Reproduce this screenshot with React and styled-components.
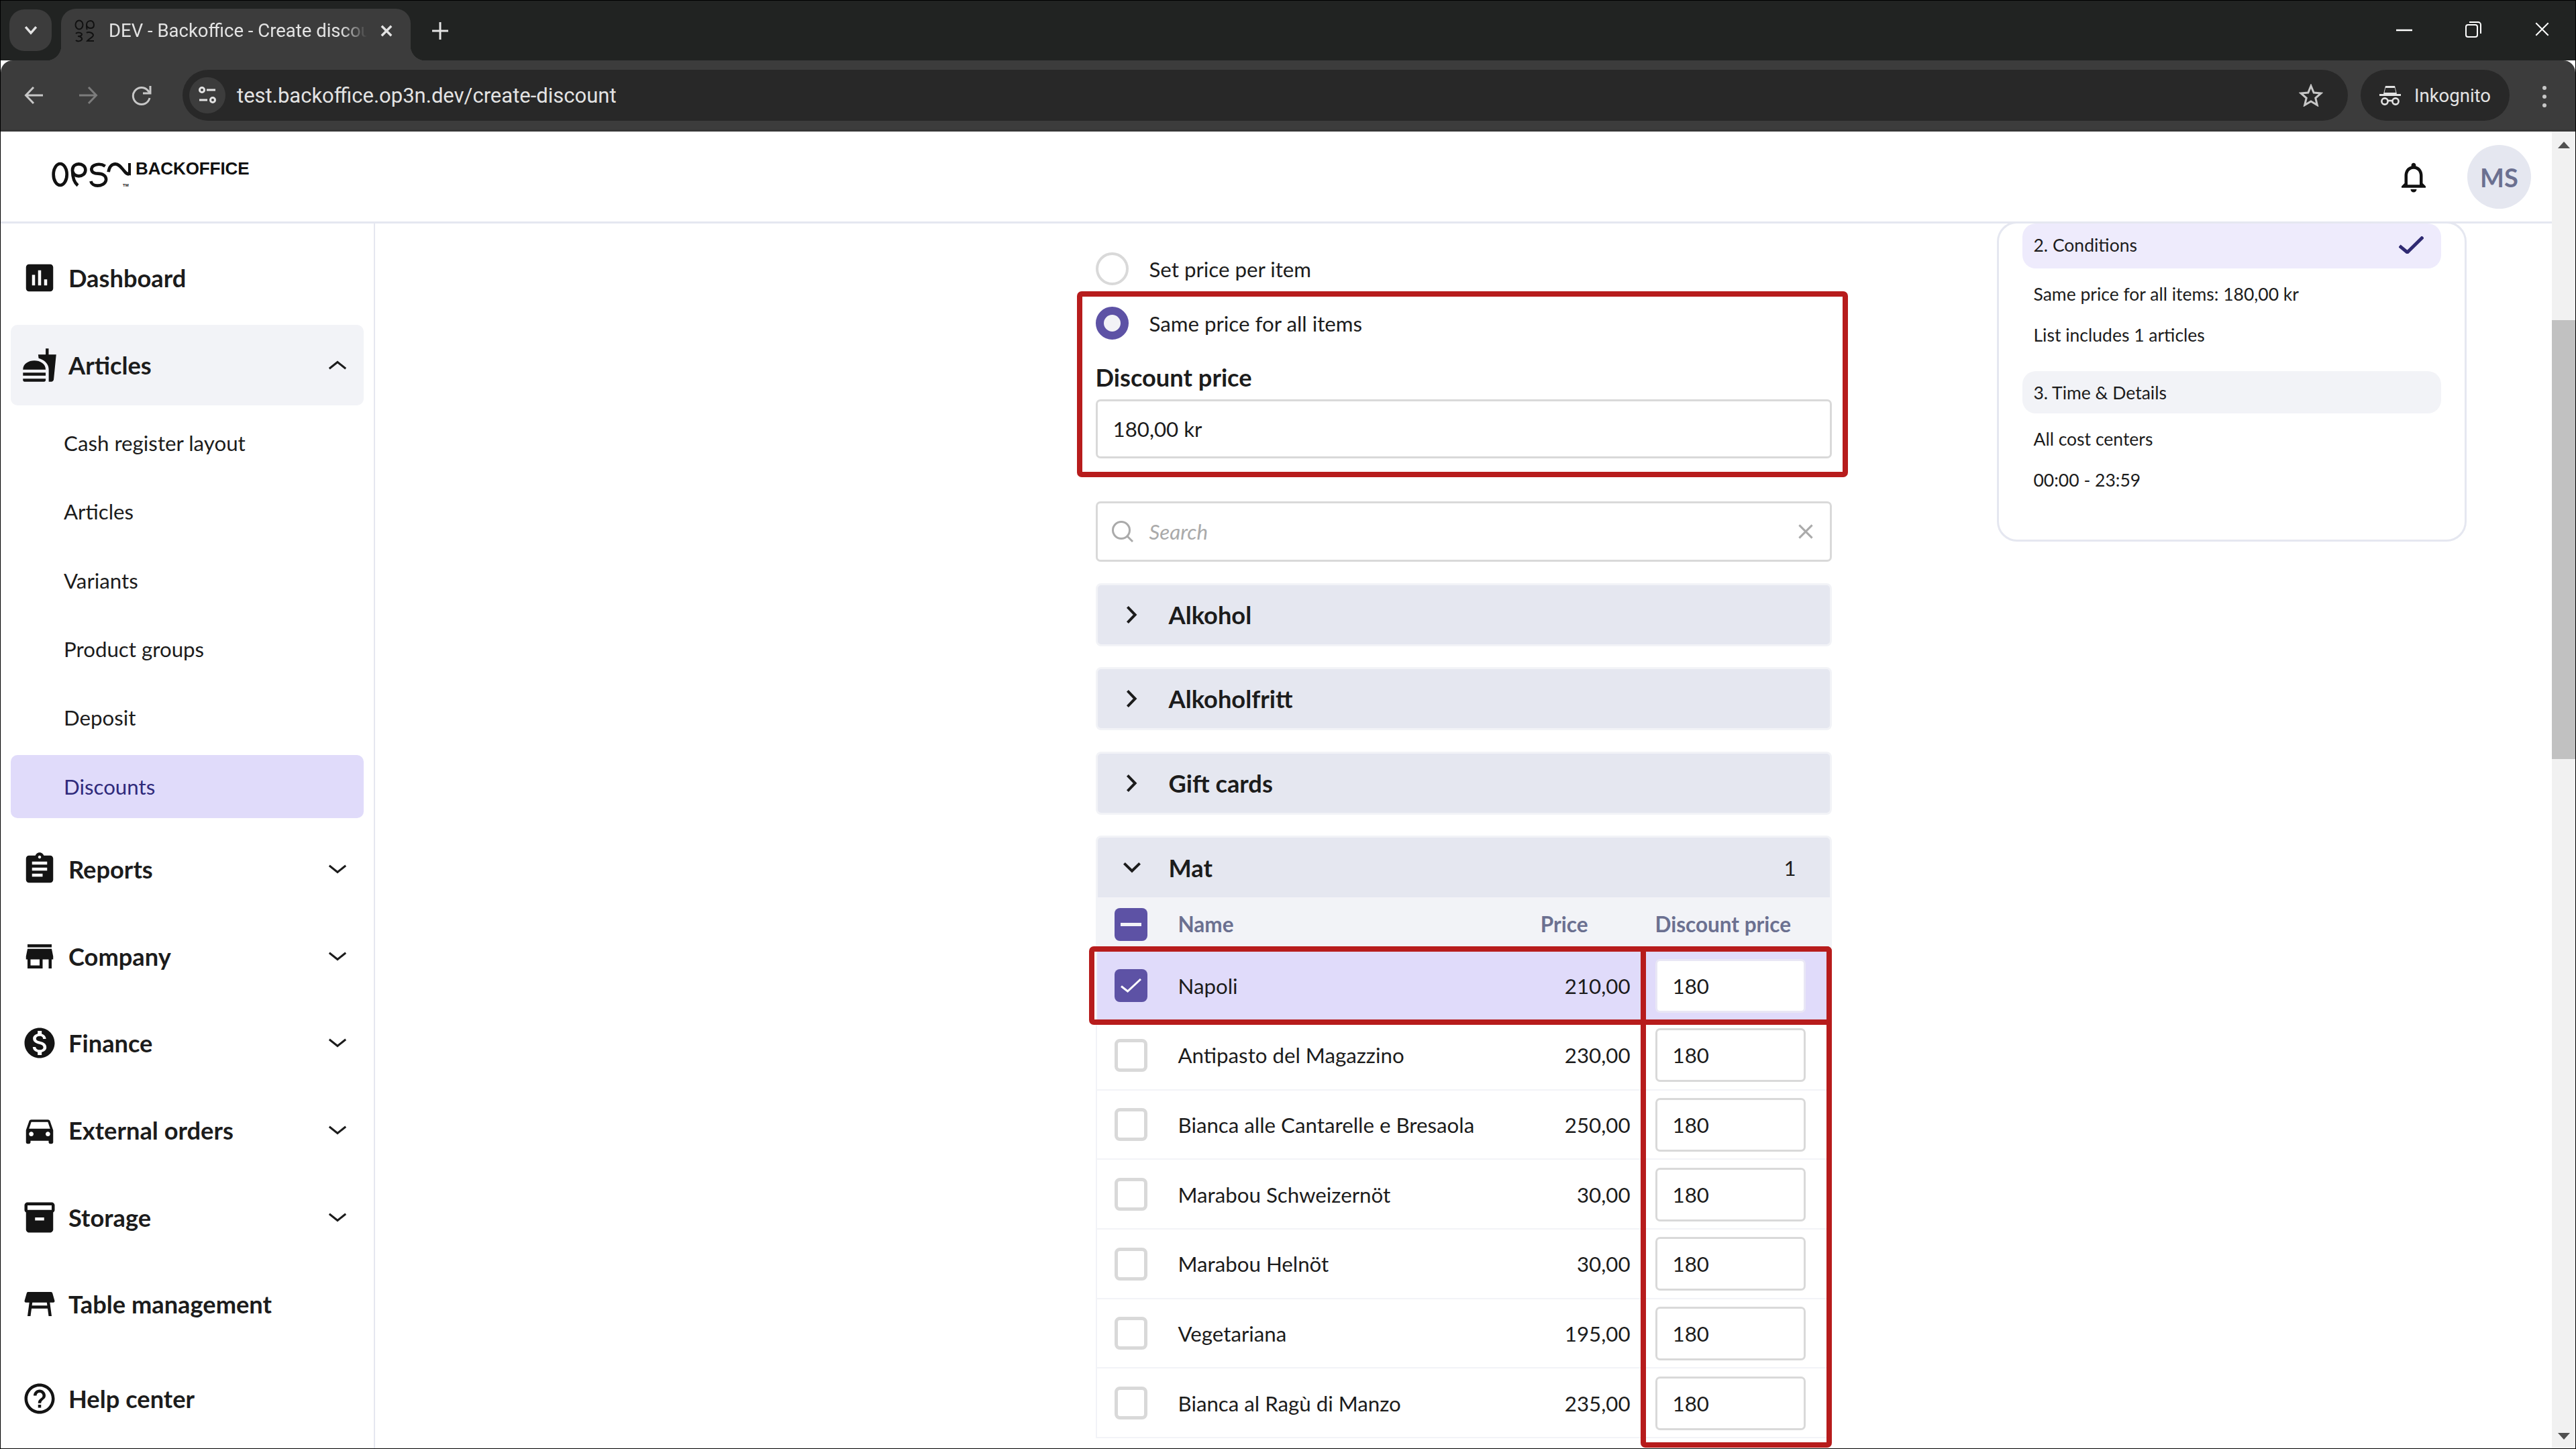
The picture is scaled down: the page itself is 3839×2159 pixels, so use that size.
import React from 'react';
import styled, {createGlobalStyle} from 'styled-components';
import {
  MdAssessment,
  MdFastfood,
  MdAssignment,
  MdStore,
  MdMonetizationOn,
  MdDirectionsCar,
  MdInventory2,
  MdTableRestaurant,
  MdHelpOutline,
  MdNotificationsNone,
} from 'react-icons/md';

const GlobalStyle = createGlobalStyle`
  * { box-sizing: border-box; }
  html, body { margin: 0; padding: 0; overflow: hidden; background: #fff; }
  body { font-family: Lato, "Liberation Sans", sans-serif; color: #1a1a1a; }
`;

const Window = styled.div`
  width: 100vw;
  height: 100vh;
  display: flex;
  flex-direction: column;
  border: 1px solid #000;
  overflow: hidden;
`;

/* browser chrome */
const TabStrip = styled.div`
  height: 89px;
  flex: none;
  display: flex;
  background: #212322;
  font-family: Roboto, "Noto Sans", sans-serif;
  color: #e3e3e3;
`;

const TabListButton = styled.div`
  width: 63px;
  height: 62px;
  margin: 13px 0 0 13px;
  border-radius: 22px;
  background: #3c3c3c;
  display: flex;
  align-items: center;
  justify-content: center;
`;

const Tab = styled.div`
  position: relative;
  width: 521px;
  height: 77px;
  margin: 12px 0 0 14px;
  padding: 0 0 12px 20px;
  border-radius: 22px 22px 0 0;
  background: #3c3c3c;
  display: flex;
  align-items: center;
  font-size: 27.5px;

  &::before, &::after {
    content: '';
    position: absolute;
    bottom: 0;
    width: 22px;
    height: 22px;
  }
  &::before {
    left: -22px;
    background: radial-gradient(circle at 0 0, transparent 22px, #3c3c3c 22.5px);
  }
  &::after {
    right: -22px;
    background: radial-gradient(circle at 100% 0, transparent 22px, #3c3c3c 22.5px);
  }
`;

const TabTitle = styled.div`
  width: 385px;
  margin-left: 21px;
  white-space: nowrap;
  -webkit-mask-image: linear-gradient(90deg, #000 90%, transparent 100%);
  mask-image: linear-gradient(90deg, #000 90%, transparent 100%);
`;

const TabClose = styled.div`
  margin-left: 20px;
  display: flex;
`;

const NewTab = styled.div`
  margin: 32px 0 0 32px;
  display: flex;
  height: 26px;
`;

const WindowControls = styled.div`
  margin-left: auto;
  display: flex;
  align-items: flex-start;
  padding: 31px 38px 0 0;
  gap: 79px;
`;

const Toolbar = styled.div`
  height: 106px;
  flex: none;
  display: flex;
  align-items: flex-start;
  padding: 14px 0 0 35px;
  background: #3c3c3c;
  border-radius: 18px 18px 0 0;
  border-bottom: 3px solid #373737;
  font-family: Roboto, "Noto Sans", sans-serif;
  color: #e3e3e3;
`;

const NavArrows = styled.div`
  display: flex;
  align-items: center;
  height: 76px;
  gap: 50px;
`;

const AddressBar = styled.div`
  width: 3227px;
  height: 76px;
  margin-left: 46px;
  padding: 0 37px 0 10px;
  border-radius: 38px;
  background: #282828;
  display: flex;
  align-items: center;
  font-size: 31px;
`;

const SiteInfo = styled.div`
  width: 54px;
  height: 54px;
  border-radius: 50%;
  background: #3c3c3c;
  display: flex;
  align-items: center;
  justify-content: center;
`;

const Url = styled.div`
  margin-left: 17px;
  flex: 1;
`;

const IncognitoPill = styled.div`
  width: 222px;
  height: 76px;
  margin-left: 19px;
  padding-left: 28px;
  border-radius: 38px;
  background: #282828;
  display: flex;
  align-items: center;
  gap: 20px;
  font-size: 27.5px;
`;

const MenuDots = styled.div`
  margin: 24px 0 0 49px;
  display: flex;
  flex-direction: column;
  gap: 7px;

  span {
    width: 6px;
    height: 6px;
    border-radius: 50%;
    background: #c7c7c7;
  }
`;

/* page */
const Page = styled.div`
  flex: 1;
  min-height: 0;
  display: flex;
  background: #fff;
`;

const PageContent = styled.div`
  flex: 1;
  min-width: 0;
  display: flex;
  flex-direction: column;
`;

const Scrollbar = styled.div`
  width: 35px;
  flex: none;
  background: #f1f1f1;
  display: flex;
  flex-direction: column;
  align-items: center;
`;

const ScrollArrow = styled.div`
  width: 0;
  height: 0;
  border-left: 9px solid transparent;
  border-right: 9px solid transparent;
  ${(p) => (p.$down
    ? 'border-top: 10px solid #505050; margin-top: auto; margin-bottom: 13px;'
    : 'border-bottom: 10px solid #505050; margin-top: 15px;')}
`;

const ScrollThumb = styled.div`
  width: 100%;
  height: 654px;
  margin-top: 256px;
  background: #c1c1c1;
`;

const Header = styled.header`
  height: 137px;
  flex: none;
  display: flex;
  align-items: flex-start;
  padding: 20px 31px 0 75px;
  border-bottom: 3px solid #e5e7f0;
`;

const Logo = styled.div`
  position: relative;
  display: flex;
  align-items: flex-start;
  padding-top: 25px;
  gap: 7px;
`;

const LogoWord = styled.div`
  font-family: "Liberation Sans", Arial, sans-serif;
  font-weight: 700;
  font-size: 26px;
  line-height: 21px;
  color: #111;
  letter-spacing: -0.1px;
`;

const LogoTm = styled.div`
  position: absolute;
  left: 107px;
  top: 57px;
  font-family: "Liberation Sans", Arial, sans-serif;
  font-size: 6px;
  font-weight: 700;
  line-height: 6px;
  color: #111;
`;

const HeaderRight = styled.div`
  margin-left: auto;
  display: flex;
  align-items: center;
  gap: 53px;
  font-size: 54px;
  color: #111;
`;

const Avatar = styled.div`
  width: 95px;
  height: 95px;
  border-radius: 50%;
  background: #e5e7f0;
  color: #6b7090;
  display: flex;
  align-items: center;
  justify-content: center;
  font-size: 38px;
  font-weight: 700;
`;

const Body = styled.div`
  flex: 1;
  min-height: 0;
  display: flex;
`;

/* sidebar */
const Sidebar = styled.nav`
  width: 558px;
  flex: none;
  display: flex;
  flex-direction: column;
  gap: 9.7px;
  padding: 21px 15px 14px;
  border-right: 2px solid #e5e7f0;
`;

const NavGroup = styled.div`
  display: flex;
  flex-direction: column;
  gap: 9.5px;
`;

const NavRow = styled.div`
  height: 120px;
  flex: none;
  display: flex;
  align-items: center;
  padding: 0 25px 0 16px;
  border-radius: 10px;
  background: ${(p) => (p.$open ? '#f2f3f7' : 'transparent')};
  ${(p) => p.$bottom && 'margin-top: auto;'}
`;

const NavIcon = styled.div`
  width: 54px;
  height: 54px;
  margin-right: 16px;
  font-size: 54px;
  line-height: 0;
  color: #141414;
`;

const NavLabel = styled.div`
  flex: 1;
  font-size: 36.25px;
  font-weight: 700;
  color: #1c1c1c;
`;

const SubList = styled.div`
  display: flex;
  flex-direction: column;
  gap: 8.3px;
  margin-bottom: 6.5px;
`;

const SubItem = styled.div`
  height: 94px;
  display: flex;
  align-items: center;
  padding-left: 79px;
  border-radius: 10px;
  font-size: 31.25px;
  background: ${(p) => (p.$active ? '#e0dbfa' : 'transparent')};
  color: ${(p) => (p.$active ? '#2f2a7b' : '#1c1c1c')};
`;

/* main */
const Main = styled.main`
  flex: 1;
  min-width: 0;
  display: grid;
  grid-template-columns: 1fr 1097px 1fr;
  overflow: hidden;
`;

const Form = styled.div`
  grid-column: 2;
  padding-top: 43px;
`;

const RadioRow = styled.div`
  height: 49px;
  display: flex;
  align-items: center;
  gap: 31px;
  font-size: 31.25px;
  color: #1c1c1c;
  margin-bottom: ${(p) => (p.$last ? '0' : '32px')};
`;

const Radio = styled.div`
  width: 49px;
  height: 49px;
  flex: none;
  border-radius: 50%;
  border: ${(p) => (p.$checked ? '12px solid #5d52a5' : '4px solid #d9d9d9')};
  background: ${(p) => (p.$checked ? '#f2f2f6' : '#fff')};
`;

const PriceGroup = styled.div`
  position: relative;
  margin-bottom: 64px;
`;

const Highlight = styled.div`
  position: absolute;
  border: 8px solid #b71c1c;
  border-radius: 7px;
  pointer-events: none;
  z-index: 2;
`;

const PriceHighlight = styled(Highlight)`
  inset: -23px -24px -28px -28px;
`;

const RowHighlight = styled(Highlight)`
  top: 165px;
  left: -10px;
  right: 0;
  height: 117px;
`;

const ColumnHighlight = styled(Highlight)`
  top: 165px;
  left: 812px;
  right: 0;
  height: 747px;
`;

const FieldLabel = styled.div`
  height: 40px;
  line-height: 40px;
  margin-top: 36px;
  font-size: 36.25px;
  font-weight: 700;
  color: #1c1c1c;
`;

const Field = styled.div`
  height: 88px;
  margin-top: 13px;
  padding-left: 23px;
  display: flex;
  align-items: center;
  border: 3px solid #d9d9d9;
  border-radius: 7px;
  background: #fff;
  font-size: 31.25px;
  color: #1c1c1c;
`;

const SearchBox = styled(Field)`
  height: 90px;
  margin-top: 0;
  margin-bottom: 32px;
  padding: 0 24px 0 20px;
  color: #aaa;
  font-style: italic;
`;

const SearchText = styled.div`
  flex: 1;
  margin-left: 23px;
`;

const Accordions = styled.div`
  display: flex;
  flex-direction: column;
  gap: 31.4px;
`;

const AccordionHead = styled.div`
  height: 94px;
  display: flex;
  align-items: center;
  padding: 0 50px 0 35px;
  background: #e5e7f0;
  border: 3px solid #f2f3f7;
  border-radius: 8px;
  font-size: 36.25px;
  font-weight: 700;
  color: #1c1c1c;
  ${(p) => p.$open && 'border-bottom: 0; border-radius: 8px 8px 0 0; height: 92px;'}
`;

const ChevronSlot = styled.div`
  width: 32px;
  margin-right: 39px;
  display: flex;
  justify-content: center;
`;

const AccordionTitle = styled.div`
  flex: 1;
`;

const Count = styled.div`
  font-size: 31.25px;
  font-weight: 400;
`;

const Panel = styled.div`
  position: relative;
`;

const TableHead = styled.div`
  height: 80px;
  display: flex;
  align-items: center;
  padding: 0 39px 0 28px;
  background: #f2f3f7;
  font-size: 31.5px;
  font-weight: 700;
  color: #6b7090;
`;

const TableRow = styled.div`
  height: 103.7px;
  display: flex;
  align-items: center;
  padding: 1px 39px 0 26px;
  border-left: 2px solid #f2f3f7;
  border-bottom: 2px solid #f2f3f7;
  font-size: 31.25px;
  color: #1c1c1c;
  background: ${(p) => (p.$selected ? '#e0dbfa' : '#fff')};
`;

const Checkbox = styled.div`
  width: 49px;
  height: 49px;
  flex: none;
  display: flex;
  align-items: center;
  justify-content: center;
  border-radius: 8px;
  border: ${(p) => (p.$checked ? '0' : '5px solid #d9d9d9')};
  background: ${(p) => (p.$checked ? '#5d52a5' : '#fff')};
`;

const NameCell = styled.div`
  flex: 1;
  margin-left: 46px;
`;

const PriceCell = styled.div`
  width: 180px;
  text-align: right;
  ${(p) => p.$head && 'padding-right: 63px;'}
`;

const DiscountHead = styled.div`
  width: 224px;
  margin-left: 37px;
`;

const DiscountInput = styled.div`
  width: 224px;
  height: 80px;
  margin-left: 37px;
  padding-left: 23px;
  display: flex;
  align-items: center;
  background: #fff;
  border: 3px solid #d9d9d9;
  border-radius: 7px;
  ${(p) => p.$selected && 'border-color: #e9e7f5;'}
`;

/* summary */
const SummaryCol = styled.aside`
  grid-column: 3;
  padding-left: 246px;
`;

const SummaryCard = styled.div`
  width: 700px;
  padding: 0 35px 58px;
  margin-top: -3px;
  border: 3px solid #e5e7f0;
  border-radius: 30px;
  font-size: 26.5px;
  color: #1c1c1c;
`;

const StepRow = styled.div`
  height: ${(p) => (p.$active ? '67px' : '63px')};
  display: flex;
  align-items: center;
  justify-content: space-between;
  padding: ${(p) => (p.$active ? '0 26px 4px 17px' : '0 26px 0 17px')};
  border-radius: 20px;
  background: ${(p) => (p.$active ? '#eeebfc' : '#f2f3f7')};
`;

const StepLines = styled.div`
  padding: ${(p) => (p.$last ? '7.5px 0 0 17px' : '7.5px 0 23.5px 17px')};
  line-height: 61px;
`;

const Chevron = ({dir = 'down', w = 28, h = 14, stroke = 3, color = '#1c1c1c'}) => {
  const p = stroke * 0.6;
  const pts = {
    down: `${p},${p} ${w / 2},${h - p * 1.4} ${w - p},${p}`,
    up: `${p},${h - p} ${w / 2},${p * 1.4} ${w - p},${h - p}`,
    right: `${p},${p} ${w - p * 1.4},${h / 2} ${p},${h - p}`,
  }[dir];
  return (
    <svg width={w} height={h} viewBox={`0 0 ${w} ${h}`} fill="none">
      <polyline points={pts} stroke={color} strokeWidth={stroke} />
    </svg>
  );
};

const LogoMark = () => (
  <svg width="119" height="38" viewBox="22 16 357 114" fill="none" stroke="#111" strokeWidth="14">
    <ellipse cx="63" cy="73" rx="30" ry="48" />
    <path d="M118 53 C118 35 132 26 146 26 C162 26 176 36 176 53 C176 70 162 80 146 80 C132 80 118 70 118 53 C118 80 122 106 142 122" />
    <path d="M264 36 C240 20 205 28 203 48 C203 63 215 69 232 69 C255 69 270 80 268 98 C265 116 245 123 230 123 C215 123 203 115 200 103" />
    <path d="M279 62 C282 38 295 26 310 26 C328 26 338 45 350 58 C356 66 362 71 370 71 M374 22 V77" />
  </svg>
);

const Favicon = () => (
  <svg width="30" height="34" viewBox="0 0 30 34" fill="none" stroke="#111" strokeWidth="2">
    <ellipse cx="7" cy="8" rx="5.5" ry="6.5" />
    <path d="M18 8 C18 4 21 2 24 2 C27 2 29 5 29 8 C29 11 27 13 24 13 C21 13 18 11 18 8 C18 12 18 14 19 15" />
    <path d="M2 21 C4 19 10 19 11 22 C11 25 7 25 5 25 C8 25 12 27 11 30 C9 33 4 33 2 31" />
    <path d="M18 20 C20 18 27 19 28 23 C28 27 22 28 19 32 L29 32" />
  </svg>
);

const BackArrow = ({color = '#c7c7c7', flip}) => (
  <svg width="30" height="30" viewBox="0 0 30 30" fill="none" stroke={color} strokeWidth="3" style={flip ? {transform: 'scaleX(-1)'} : undefined}>
    <path d="M28 15 H3 M14 3 L2.5 15 L14 27" />
  </svg>
);

const ReloadIcon = () => (
  <svg width="30" height="32" viewBox="0 0 30 32" fill="none" stroke="#c7c7c7" strokeWidth="3">
    <path d="M27 20 A12.5 12.5 0 1 1 24 8.5 L27 12" />
    <path d="M28 2 V13 H17" />
  </svg>
);

const TuneIcon = () => (
  <svg width="28" height="28" viewBox="0 0 28 28" fill="none" stroke="#e3e3e3" strokeWidth="3">
    <circle cx="6" cy="6" r="3.5" />
    <path d="M13 6 H26 M2 21 H14" />
    <circle cx="22" cy="21" r="3.5" />
  </svg>
);

const StarIcon = () => (
  <svg width="36" height="34" viewBox="0 0 36 34" fill="none" stroke="#c7c7c7" strokeWidth="3">
    <path d="M18 3 L22.2 13 L33 13.9 L24.8 21 L27.3 31.5 L18 25.9 L8.7 31.5 L11.2 21 L3 13.9 L13.8 13 Z" />
  </svg>
);

const IncognitoIcon = () => (
  <svg width="32" height="30" viewBox="0 0 32 30">
    <path d="M9 1 H23 L26 13 H6 Z M9 4 L7.5 11 H24.5 L23 4 Z" fill="#e3e3e3" fillRule="evenodd" />
    <rect x="0" y="13" width="32" height="3" fill="#e3e3e3" />
    <g fill="none" stroke="#e3e3e3" strokeWidth="2.6">
      <circle cx="8" cy="24" r="4.6" />
      <circle cx="24" cy="24" r="4.6" />
      <path d="M12.5 23 H19.5" />
    </g>
  </svg>
);

const CloseIcon = ({size = 20, stroke = 3, color = '#e3e3e3'}) => (
  <svg width={size} height={size} viewBox="0 0 20 20" fill="none" stroke={color} strokeWidth={stroke * 20 / size}>
    <path d="M2 2 L18 18 M18 2 L2 18" />
  </svg>
);

const CheckMark = ({w = 31, h = 21, stroke = 3, color = '#fff'}) => (
  <svg width={w} height={h} viewBox={`0 0 ${w} ${h}`} fill="none" stroke={color} strokeWidth={stroke}>
    <polyline points={`1,${h * 0.55} ${w * 0.34},${h - 2} ${w - 1},1`} />
  </svg>
);

const SearchIcon = () => (
  <svg width="34" height="34" viewBox="0 0 34 34" fill="none" stroke="#aaa" strokeWidth="3">
    <circle cx="15" cy="15" r="12.5" />
    <path d="M24 24 L32 32" />
  </svg>
);

const MinusMark = () => (
  <svg width="31" height="5" viewBox="0 0 31 5">
    <rect width="31" height="5" fill="#f2f3f7" />
  </svg>
);

const navItems = [
  {label: 'Reports', icon: <MdAssignment />, chevron: true},
  {label: 'Company', icon: <MdStore />, chevron: true},
  {label: 'Finance', icon: <MdMonetizationOn />, chevron: true},
  {label: 'External orders', icon: <MdDirectionsCar />, chevron: true},
  {label: 'Storage', icon: <MdInventory2 />, chevron: true},
  {label: 'Table management', icon: <MdTableRestaurant />},
];

const subItems = ['Cash register layout', 'Articles', 'Variants', 'Product groups', 'Deposit', 'Discounts'];

const rows = [
  ['Napoli', '210,00'],
  ['Antipasto del Magazzino', '230,00'],
  ['Bianca alle Cantarelle e Bresaola', '250,00'],
  ['Marabou Schweizernöt', '30,00'],
  ['Marabou Helnöt', '30,00'],
  ['Vegetariana', '195,00'],
  ['Bianca al Ragù di Manzo', '235,00'],
];

function BrowserChrome() {
  return (
    <>
      <TabStrip>
        <TabListButton><Chevron w={20} h={14} stroke={3.5} color="#e3e3e3" /></TabListButton>
        <Tab>
          <Favicon />
          <TabTitle>DEV - Backoffice - Create discou</TabTitle>
          <TabClose><CloseIcon size={18} stroke={3.5} /></TabClose>
        </Tab>
        <NewTab>
          <svg width="24" height="26" viewBox="0 0 24 26" stroke="#e3e3e3" strokeWidth="3"><path d="M12 0 V26 M0 13 H24" /></svg>
        </NewTab>
        <WindowControls>
          <svg width="24" height="26" viewBox="0 0 24 26" stroke="#fff" strokeWidth="2.5"><path d="M0 13 H24" /></svg>
          <svg width="24" height="24" viewBox="0 0 24 24" fill="none" stroke="#fff" strokeWidth="2"><rect x="1" y="5" width="17" height="18" rx="3" /><path d="M6 1 H19 A4 4 0 0 1 23 5 V18" /></svg>
          <CloseIcon size={23} stroke={2} color="#fff" />
        </WindowControls>
      </TabStrip>
      <Toolbar>
        <NavArrows>
          <BackArrow />
          <BackArrow flip color="#7c7c7c" />
          <ReloadIcon />
        </NavArrows>
        <AddressBar>
          <SiteInfo><TuneIcon /></SiteInfo>
          <Url>test.backoffice.op3n.dev/create-discount</Url>
          <StarIcon />
        </AddressBar>
        <IncognitoPill>
          <IncognitoIcon />
          Inkognito
        </IncognitoPill>
        <MenuDots><span /><span /><span /></MenuDots>
      </Toolbar>
    </>
  );
}

function SideNav() {
  return (
    <Sidebar>
      <NavRow>
        <NavIcon><MdAssessment /></NavIcon>
        <NavLabel>Dashboard</NavLabel>
      </NavRow>
      <NavGroup>
        <NavRow $open>
          <NavIcon><MdFastfood /></NavIcon>
          <NavLabel>Articles</NavLabel>
          <Chevron dir="up" />
        </NavRow>
        <SubList>
          {subItems.map((item) => (
            <SubItem key={item} $active={item === 'Discounts'}>{item}</SubItem>
          ))}
        </SubList>
      </NavGroup>
      {navItems.map((item) => (
        <NavRow key={item.label}>
          <NavIcon>{item.icon}</NavIcon>
          <NavLabel>{item.label}</NavLabel>
          {item.chevron && <Chevron />}
        </NavRow>
      ))}
      <NavRow $bottom>
        <NavIcon><MdHelpOutline /></NavIcon>
        <NavLabel>Help center</NavLabel>
      </NavRow>
    </Sidebar>
  );
}

function DiscountForm() {
  return (
    <Form>
      <RadioRow>
        <Radio />
        Set price per item
      </RadioRow>
      <PriceGroup>
        <PriceHighlight />
        <RadioRow $last>
          <Radio $checked />
          Same price for all items
        </RadioRow>
        <FieldLabel>Discount price</FieldLabel>
        <Field>180,00 kr</Field>
      </PriceGroup>
      <SearchBox>
        <SearchIcon />
        <SearchText>Search</SearchText>
        <CloseIcon size={24} stroke={3} color="#aaa" />
      </SearchBox>
      <Accordions>
        {['Alkohol', 'Alkoholfritt', 'Gift cards'].map((name) => (
          <AccordionHead key={name}>
            <ChevronSlot><Chevron dir="right" w={17} h={28} stroke={4} /></ChevronSlot>
            <AccordionTitle>{name}</AccordionTitle>
          </AccordionHead>
        ))}
        <Panel>
          <RowHighlight />
          <ColumnHighlight />
          <AccordionHead $open>
            <ChevronSlot><Chevron w={28} h={17} stroke={4} /></ChevronSlot>
            <AccordionTitle>Mat</AccordionTitle>
            <Count>1</Count>
          </AccordionHead>
          <TableHead>
            <Checkbox $checked><MinusMark /></Checkbox>
            <NameCell>Name</NameCell>
            <PriceCell $head>Price</PriceCell>
            <DiscountHead>Discount price</DiscountHead>
          </TableHead>
          {rows.map(([name, price], i) => (
            <TableRow key={name} $selected={i === 0}>
              <Checkbox $checked={i === 0}>{i === 0 && <CheckMark />}</Checkbox>
              <NameCell>{name}</NameCell>
              <PriceCell>{price}</PriceCell>
              <DiscountInput $selected={i === 0}>180</DiscountInput>
            </TableRow>
          ))}
        </Panel>
      </Accordions>
    </Form>
  );
}

function Summary() {
  return (
    <SummaryCol>
      <SummaryCard>
        <StepRow $active>
          2. Conditions
          <CheckMark w={37} h={26} stroke={5} color="#2f2a72" />
        </StepRow>
        <StepLines>
          <div>Same price for all items: 180,00 kr</div>
          <div>List includes 1 articles</div>
        </StepLines>
        <StepRow>3. Time &amp; Details</StepRow>
        <StepLines $last>
          <div>All cost centers</div>
          <div>00:00 - 23:59</div>
        </StepLines>
      </SummaryCard>
    </SummaryCol>
  );
}

export default function App() {
  return (
    <>
      <GlobalStyle />
      <Window>
        <BrowserChrome />
        <Page>
          <PageContent>
            <Header>
              <Logo>
                <LogoMark />
                <LogoWord>BACKOFFICE</LogoWord>
                <LogoTm>TM</LogoTm>
              </Logo>
              <HeaderRight>
                <MdNotificationsNone />
                <Avatar>MS</Avatar>
              </HeaderRight>
            </Header>
            <Body>
              <SideNav />
              <Main>
                <DiscountForm />
                <Summary />
              </Main>
            </Body>
          </PageContent>
          <Scrollbar>
            <ScrollArrow />
            <ScrollThumb />
            <ScrollArrow $down />
          </Scrollbar>
        </Page>
      </Window>
    </>
  );
}
